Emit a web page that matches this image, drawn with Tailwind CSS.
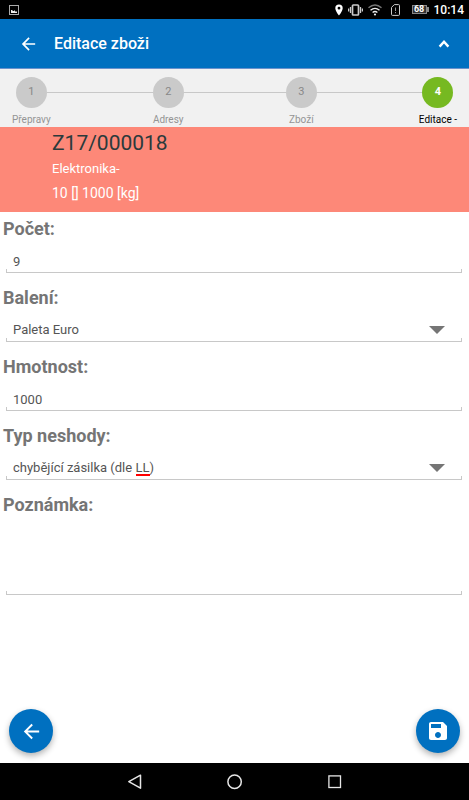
<!DOCTYPE html>
<html lang="cs">
<head>
<meta charset="utf-8">
<meta name="viewport" content="width=device-width, initial-scale=1">
<title>Editace zboži</title>
<script src="https://cdn.jsdelivr.net/npm/@tailwindcss/browser@4"></script>
</head>
<body class="flex min-h-screen flex-col bg-white font-['Roboto',sans-serif] text-[#555]">
  <!-- System status bar -->
  <div class="flex h-[19px] items-center justify-between bg-black pr-[5px] pl-[9px] text-white">
    <svg class="h-[10px] w-[10px]" viewBox="0 0 10 10" fill="none" aria-hidden="true"><rect x=".5" y=".5" width="9" height="9" stroke="#aaa"/><path d="M2 8V5h1.500v1H5v-.5h1v1h2V8z" fill="#eee"/></svg>
    <div class="flex items-center">
      <svg class="mr-[5px] h-[12px] w-[8px]" viewBox="0 0 8 12" aria-hidden="true"><path fill="#fff" fill-rule="evenodd" d="M4 .5A3.700 3.700 0 0 0 .3 4.200C.3 7 4 11.500 4 11.500S7.700 7 7.700 4.200A3.700 3.700 0 0 0 4 .5zm0 2.300a1.400 1.400 0 1 1 0 2.800 1.400 1.400 0 0 1 0-2.800z"/></svg>
      <svg class="mr-[5px] h-[12px] w-[15px]" viewBox="0 0 15 12" fill="none" stroke="#ccc" aria-hidden="true"><rect x="4.500" y="1" width="6" height="10" rx=".8" stroke-width="1.700"/><path d="M2.500 3v6M12.500 3v6M.6 4.500v3M14.400 4.500v3" stroke-width="1.300"/></svg>
      <svg class="mr-[9px] h-[12px] w-[14px]" viewBox="0 0 14 12" fill="none" stroke-width="1.400" aria-hidden="true"><path d="M.5 3.700c4-3.400 9-3.400 13 0" stroke="#777"/><path d="M2.500 6.200c2.800-2.300 6.200-2.300 9 0M4.600 8.500c1.500-1.200 3.300-1.200 4.800 0" stroke="#eee"/><circle cx="7" cy="10.500" r="1.100" fill="#eee"/></svg>
      <svg class="mr-[12px] h-[12px] w-[9px]" viewBox="0 0 9 12" fill="none" stroke="#ccc" aria-hidden="true"><path d="M3.300.6h4.200a1 1 0 0 1 1 1v8.800a1 1 0 0 1-1 1h-6a1 1 0 0 1-1-1V3.400z"/><path d="M4.500 3.500v3.500M4.500 8v1.200" stroke="#999"/></svg>
      <span class="flex h-[9px] w-[15px] items-center justify-center border border-[#888] bg-[#333] text-[9px] leading-none font-bold">68</span>
      <span class="mr-[5px] h-[5px] w-[2px] bg-[#888]"></span>
      <span class="text-[12px] leading-none font-medium">10:14</span>
    </div>
  </div>

  <!-- App bar -->
  <header class="flex h-[50px] items-center border-b border-[#6a92cc] bg-[#0070c0] px-[18px] text-white">
    <button type="button" aria-label="Zpět" class="mr-[15px]">
      <svg class="block h-[20px] w-[21px]" viewBox="0 0 24 24" fill="currentColor" aria-hidden="true"><path d="M20 11H7.830l5.590-5.590L12 4l-8 8 8 8 1.410-1.410L7.830 13H20v-2z"/></svg>
    </button>
    <h1 class="flex-1 text-[16px] leading-6 font-medium">Editace zboži</h1>
    <button type="button" aria-label="Sbalit">
      <svg class="block h-[14px] w-[14px]" viewBox="0 0 14 14" fill="none" stroke="currentColor" stroke-width="2.400" aria-hidden="true"><path d="M2.600 9.600 7 4.800l4.400 4.800"/></svg>
    </button>
  </header>

  <!-- Stepper -->
  <nav aria-label="Kroky">
    <ol class="flex h-[58px] bg-[#f1f1f1] px-[12px] pt-[8px] text-[#949494]">
      <li class="flex flex-col items-center gap-[5px]">
        <span class="z-10 flex h-[31px] w-[31px] items-center justify-center rounded-full bg-[#cacaca] text-[11px] text-[#888]">1</span>
        <span class="text-[10px] leading-[14px]">Přepravy</span>
      </li>
      <li role="presentation" class="-mx-1 mt-[15px] h-px flex-1 bg-[#c8c8c8]"></li>
      <li class="flex flex-col items-center gap-[5px]">
        <span class="z-10 flex h-[31px] w-[31px] items-center justify-center rounded-full bg-[#cacaca] text-[11px] text-[#888]">2</span>
        <span class="text-[10px] leading-[14px]">Adresy</span>
      </li>
      <li role="presentation" class="-mx-1 mt-[15px] h-px flex-1 bg-[#c8c8c8]"></li>
      <li class="flex flex-col items-center gap-[5px]">
        <span class="z-10 flex h-[31px] w-[31px] items-center justify-center rounded-full bg-[#cacaca] text-[11px] text-[#888]">3</span>
        <span class="text-[10px] leading-[14px]">Zboží</span>
      </li>
      <li role="presentation" class="-mx-1 mt-[15px] h-px flex-1 bg-[#c8c8c8]"></li>
      <li class="flex flex-col items-center gap-[5px]" aria-current="step">
        <span class="z-10 flex h-[31px] w-[31px] items-center justify-center rounded-full bg-[#76b921] text-[11px] font-bold text-white">4</span>
        <span class="text-[10px] leading-[14px] text-black">Editace -</span>
      </li>
    </ol>
  </nav>

  <!-- Shipment summary -->
  <section class="h-[85px] bg-[#fd8878] pt-[2px] pl-[52px] text-white">
    <h2 class="text-[21px] leading-[28px] text-[#2b3a3c]">Z17/000018</h2>
    <p class="text-[13px] leading-[24px]">Elektronika-</p>
    <p class="text-[14px] leading-[24px]">10 [] 1000 [kg]</p>
  </section>

  <form id="item" class="flex flex-1 flex-col gap-[13px] pt-[5px] pr-[7px] pl-[6px]">
    <div class="flex flex-col">
      <label for="count" class="-ml-[3px] text-[18px] leading-6 font-bold text-[#757575]">Počet:</label>
      <div class="relative after:pointer-events-none after:absolute after:inset-x-0 after:bottom-0 after:h-1 after:border-x after:border-b after:border-[#c8c8c8]">
        <input id="count" type="text" inputmode="numeric" value="9" class="block h-8 w-full bg-transparent px-[7px] pt-2 text-[13px] outline-none">
      </div>
    </div>
    <div class="flex flex-col">
      <label for="pack" class="-ml-[3px] text-[18px] leading-6 font-bold text-[#757575]">Balení:</label>
      <div class="relative after:pointer-events-none after:absolute after:inset-x-0 after:bottom-0 after:h-1 after:border-x after:border-b after:border-[#c8c8c8]">
        <select id="pack" class="block h-8 w-full appearance-none bg-transparent px-[7px] pt-2 text-[13px] outline-none"><option>Paleta Euro</option></select>
        <svg class="pointer-events-none absolute right-[17px] bottom-2 h-2 w-4" viewBox="0 0 16 8" aria-hidden="true"><path d="M0 0h16L8 8z" fill="#757575"/></svg>
      </div>
    </div>
    <div class="flex flex-col">
      <label for="weight" class="-ml-[3px] text-[18px] leading-6 font-bold text-[#757575]">Hmotnost:</label>
      <div class="relative after:pointer-events-none after:absolute after:inset-x-0 after:bottom-0 after:h-1 after:border-x after:border-b after:border-[#c8c8c8]">
        <input id="weight" type="text" inputmode="decimal" value="1000" class="block h-8 w-full bg-transparent px-[7px] pt-2 text-[13px] outline-none">
      </div>
    </div>
    <div class="flex flex-col">
      <label for="issue" class="-ml-[3px] text-[18px] leading-6 font-bold text-[#757575]">Typ neshody:</label>
      <div class="relative after:pointer-events-none after:absolute after:inset-x-0 after:bottom-0 after:h-1 after:border-x after:border-b after:border-[#c8c8c8]">
        <select id="issue" class="block h-8 w-full appearance-none bg-transparent px-[7px] pt-2 text-[13px] outline-none"><option>chybějící zásilka (dle LL)</option></select>
        <!-- Spell-check mark under the abbreviation -->
        <span class="pointer-events-none absolute bottom-1 left-[130px] h-[2px] w-[14px] bg-[#f00]"></span>
        <svg class="pointer-events-none absolute right-[17px] bottom-2 h-2 w-4" viewBox="0 0 16 8" aria-hidden="true"><path d="M0 0h16L8 8z" fill="#757575"/></svg>
      </div>
    </div>
    <div class="flex flex-col">
      <label for="note" class="-ml-[3px] text-[18px] leading-6 font-bold text-[#757575]">Poznámka:</label>
      <div class="relative after:pointer-events-none after:absolute after:inset-x-0 after:bottom-0 after:h-1 after:border-x after:border-b after:border-[#c8c8c8]">
        <textarea id="note" class="block h-[78px] w-full resize-none bg-transparent px-[7px] pt-2 text-[13px] outline-none"></textarea>
      </div>
    </div>
  </form>

  <!-- Floating actions -->
  <div class="flex justify-between px-[9px] pb-[10px] text-white">
    <button type="button" aria-label="Zpět" class="flex h-11 w-11 items-center justify-center rounded-full bg-[#0070c0] shadow-[0_3px_6px_rgba(0,0,0,0.3)]">
      <svg class="h-[23px] w-[23px]" viewBox="0 0 24 24" fill="currentColor" aria-hidden="true"><path d="M20 11H7.830l5.590-5.590L12 4l-8 8 8 8 1.410-1.410L7.830 13H20v-2z"/></svg>
    </button>
    <button type="submit" form="item" aria-label="Uložit" class="flex h-11 w-11 items-center justify-center rounded-full bg-[#0070c0] shadow-[0_3px_6px_rgba(0,0,0,0.3)]">
      <svg class="h-[24px] w-[24px]" viewBox="0 0 24 24" fill="currentColor" aria-hidden="true"><path d="M17 3H5c-1.110 0-2 .9-2 2v14c0 1.100.89 2 2 2h14c1.100 0 2-.9 2-2V7l-4-4zm-5 16c-1.660 0-3-1.340-3-3s1.340-3 3-3 3 1.340 3 3-1.340 3-3 3zm3-10H5V5h10v4z"/></svg>
    </button>
  </div>

  <!-- System navigation -->
  <nav aria-label="Systém" class="flex h-[37px] items-center justify-center gap-[84px] bg-black text-[#e6e6e6]">
    <button type="button" aria-label="Zpět"><svg class="block h-4 w-4" viewBox="0 0 16 16" fill="none" stroke="currentColor" stroke-width="1.500" stroke-linejoin="round" aria-hidden="true"><path d="M13.500 1.200v13L1.800 7.700z"/></svg></button>
    <button type="button" aria-label="Domů"><svg class="block h-4 w-4" viewBox="0 0 16 16" fill="none" stroke="currentColor" stroke-width="1.500" aria-hidden="true"><circle cx="7.600" cy="7.700" r="6.700"/></svg></button>
    <button type="button" aria-label="Přehled"><svg class="block h-4 w-4" viewBox="0 0 16 16" fill="none" stroke="currentColor" stroke-width="1.300" aria-hidden="true"><rect x="1.900" y="1.900" width="11.600" height="11.600"/></svg></button>
  </nav>
</body>
</html>
